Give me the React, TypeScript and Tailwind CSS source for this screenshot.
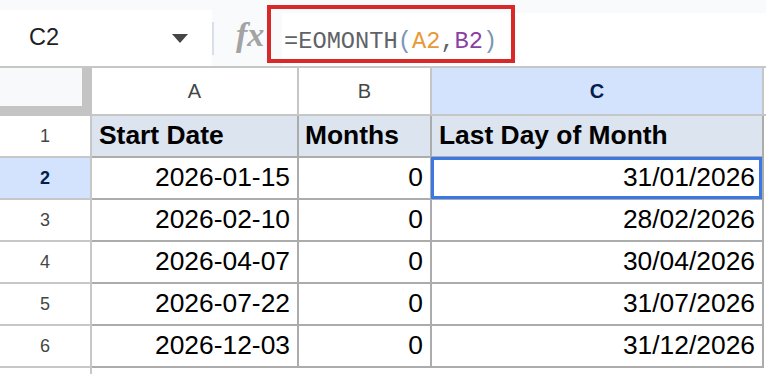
const rows = [
  { n: 2, a: "2026-01-15", b: "0", c: "31/01/2026" },
  { n: 3, a: "2026-02-10", b: "0", c: "28/02/2026" },
  { n: 4, a: "2026-04-07", b: "0", c: "30/04/2026" },
  { n: 5, a: "2026-07-22", b: "0", c: "31/07/2026" },
  { n: 6, a: "2026-12-03", b: "0", c: "31/12/2026" },
];

function FormulaBar() {
  return (
    <div className="relative flex h-[68px] bg-[#f9fafc] border-b-2 border-[#c4c7c5]">
      <div className="mt-[10px] flex h-[56px] w-[212px] items-center bg-white pl-[29px]">
        <span className="text-[23.5px] text-[#1f1f1f]">C2</span>
        <svg className="ml-auto mr-[24px]" width="16" height="9" viewBox="0 0 16 9">
          <polygon points="0,0 16,0 8,9" fill="#444746" />
        </svg>
      </div>
      <div className="mt-[22px] h-[33px] w-[2px] bg-[#d6dfea]" />
      <div className="flex w-[68px] items-center pl-[22px] pt-[3px]">
        <span className="font-['Liberation_Serif',serif] text-[34px] font-bold italic leading-none text-[#a3a3a3]">
          fx
        </span>
      </div>
      <div className="mt-[13px] flex h-[53px] flex-1 items-center bg-white pl-[2px] pt-[4px]">
        <span className="font-['Liberation_Mono',monospace] text-[23.7px] text-[#5f6368]">
          =EOMONTH<span className="text-[#7a96b5]">(</span>
          <span className="text-[#e69a36]">A2</span>,
          <span className="text-[#8b3fa3]">B2</span>
          <span className="text-[#7a96b5]">)</span>
        </span>
      </div>
      <div className="absolute left-[267px] top-[5px] h-[58px] w-[248px] border-4 border-[#d92828]" />
    </div>
  );
}

function Grid() {
  return (
    <div className="grid grid-cols-[92px_207px_133px_332px_2px]">
      {/* column headers */}
      <div className="h-[48px] bg-[#c4c4c4]">
        <div className="h-[38px] w-[82px] bg-[#f8f9fa]" />
      </div>
      <div className="flex h-[48px] items-center justify-center border-r-2 border-b-2 border-[#c4c7c5] bg-white text-[20px] text-[#444746]">
        A
      </div>
      <div className="flex h-[48px] items-center justify-center border-r-2 border-b-2 border-[#c4c7c5] bg-white text-[20px] text-[#444746]">
        B
      </div>
      <div className="flex h-[48px] items-center justify-center border-r-2 border-b-2 border-[#c4c7c5] bg-[#d3e3fd] text-[20px] font-bold text-[#041e49]">
        C
      </div>
      <div className="h-[48px] border-b-2 border-[#c4c7c5] bg-white" />

      {/* row 1: headings */}
      <div className="flex h-[42px] items-center justify-center border-r-2 border-b-2 border-[#c7c7c7] text-[18px] text-[#444746]">
        1
      </div>
      <div className="flex h-[42px] items-center border-r-2 border-b-2 border-[#acacac] bg-[#dce4ef] px-[7px] text-[26.4px] font-bold text-black">
        Start Date
      </div>
      <div className="flex h-[42px] items-center border-r-2 border-b-2 border-[#acacac] bg-[#dce4ef] px-[6px] text-[26.4px] font-bold text-black">
        Months
      </div>
      <div className="flex h-[42px] items-center border-r-2 border-b-2 border-[#acacac] bg-[#dce4ef] px-[7px] text-[26.4px] font-bold text-black">
        Last Day of Month
      </div>
      <div className="h-[42px]" />

      {rows.map((r) => {
        const sel = r.n === 2;
        return [
          <div
            key={`h${r.n}`}
            className={
              sel
                ? "flex h-[42px] items-center justify-center border-r-2 border-b-2 border-[#c7c7c7] bg-[#d3e3fd] text-[18px] font-bold text-[#041e49]"
                : "flex h-[42px] items-center justify-center border-r-2 border-b-2 border-[#c7c7c7] text-[18px] text-[#444746]"
            }
          >
            {r.n}
          </div>,
          <div key={`a${r.n}`} className="flex h-[42px] items-center justify-end border-r-2 border-b-2 border-[#acacac] px-[7px] text-[26.4px] text-black">
            {r.a}
          </div>,
          <div key={`b${r.n}`} className="flex h-[42px] items-center justify-end border-r-2 border-b-2 border-[#acacac] px-[7px] text-[26.4px] text-black">
            {r.b}
          </div>,
          <div key={`c${r.n}`} className="relative flex h-[42px] items-center justify-end border-r-2 border-b-2 border-[#acacac] px-[7px] text-[26.4px] text-black">
            {r.c}
            {sel && (
              <div className="absolute left-[-1px] top-[-1px] h-[42px] w-[331px] border-[3px] border-[#3b78e7]" />
            )}
          </div>,
          <div key={`e${r.n}`} className="h-[42px]" />,
        ];
      })}

      {/* row 7, cut off */}
      <div className="h-[8px] border-r-2 border-[#c7c7c7]" />
    </div>
  );
}

export default function App() {
  return (
    <div className="relative h-[374px] w-[766px] overflow-hidden bg-white font-['Liberation_Sans',Arial,sans-serif]">
      <FormulaBar />
      <Grid />
    </div>
  );
}
